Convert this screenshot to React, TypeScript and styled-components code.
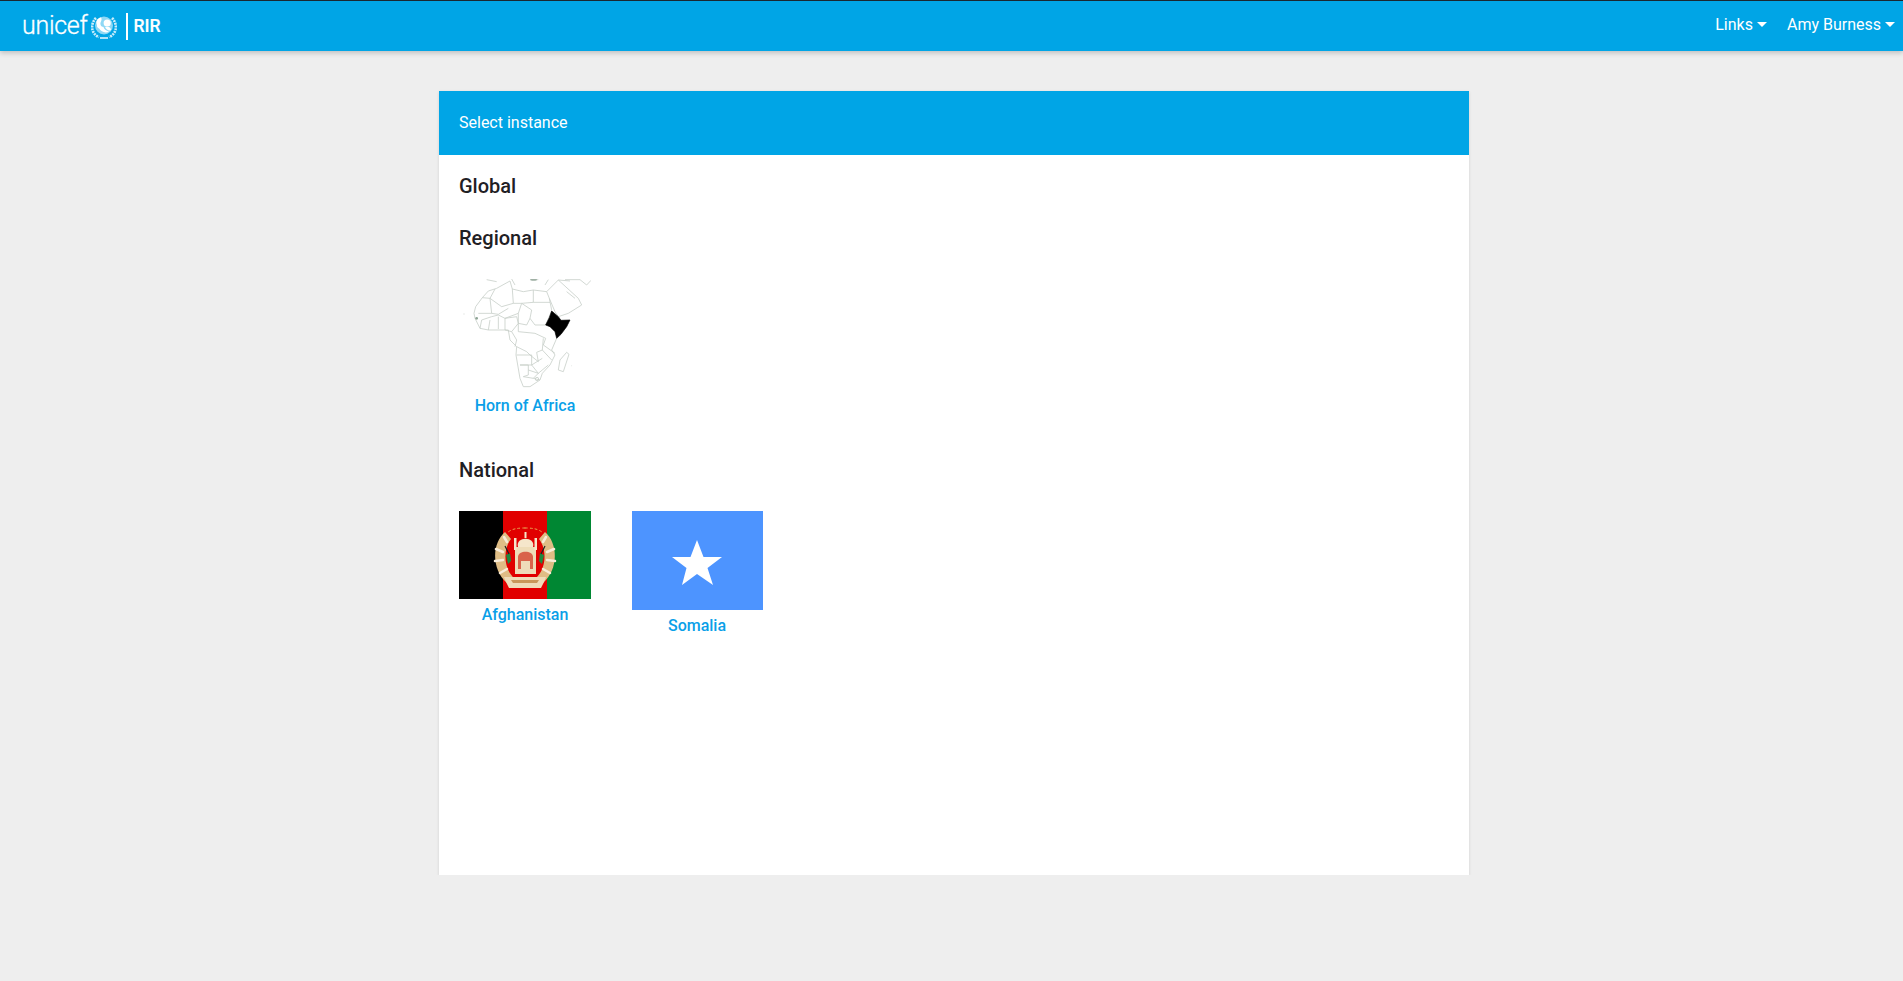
import React from 'react';
import styled, { createGlobalStyle } from 'styled-components';

const BLUE = '#00a5e6';

const Global = createGlobalStyle`
  html, body {
    margin: 0;
    padding: 0;
    background: #eeeeee;
    font-family: Roboto, 'Liberation Sans', sans-serif;
  }
`;

const NAVBAR = styled.header`
  height: 50px;
  border-top: 1px solid #1a2730;
  background: ${BLUE};
  box-shadow: 0 2px 5px rgba(0, 0, 0, 0.2);
  display: flex;
  align-items: center;
  justify-content: space-between;
  padding: 0 8px 0 22px;
  color: #fff;
`;
const BRAND = styled.div`
  display: flex;
  align-items: center;
`;
const WORDMARK = styled.span`
  font-size: 25px;
  font-weight: 300;
  letter-spacing: -0.3px;
  line-height: 30px;
  margin-right: 4px;
  -webkit-text-stroke: 0.3px #fff;
`;
const DIVIDER = styled.span`
  width: 2px;
  height: 27px;
  background: #fff;
  margin: 0 5px 0 9px;
`;
const PRODUCT = styled.span`
  font-size: 17.5px;
  font-weight: 500;
  -webkit-text-stroke: 0.2px #fff;
`;
const MENU = styled.nav`
  display: flex;
  gap: 20px;
  margin-top: -3px;
`;
const MENU_ITEM = styled.span`
  display: flex;
  align-items: center;
  gap: 4px;
  font-size: 16px;
`;
const CARET = styled.i`
  width: 0;
  height: 0;
  border-left: 5px solid transparent;
  border-right: 5px solid transparent;
  border-top: 5px solid #fff;
`;
const MAIN = styled.main`
  display: flex;
  justify-content: center;
  padding: 40px 0 0 5px;
`;
const CARD = styled.div`
  width: 1030px;
  height: 784px;
  background: #fff;
  box-shadow: 0 1px 3px rgba(0, 0, 0, 0.12);
`;
const CARD_HEADER = styled.div`
  height: 62px;
  background: ${BLUE};
  color: #fff;
  font-size: 16px;
  display: flex;
  align-items: center;
  padding: 0 20px 2px;
`;
const CARD_BODY = styled.div`
  padding: 19px 20px 0;
  color: #1f2024;
`;
const SECTION = styled.section`
  margin-bottom: 28px;
`;
const HEADING = styled.h2`
  margin: 0;
  font-size: 20px;
  line-height: 24px;
  font-weight: 500;
`;
const INSTANCES = styled.div`
  display: flex;
  align-items: flex-start;
  gap: 40px;
  margin: 29px 0 43px;
`;
const INSTANCE = styled.a`
  width: 132px;
  display: flex;
  flex-direction: column;
  align-items: center;
  color: #0a9fe8;
  font-size: 16px;
  font-weight: 500;
  line-height: 19px;
`;
const PICTURE = styled.svg`
  display: block;
  margin-bottom: 6px;
`;

// map traced at 3x, scaled back down by the group transform
const MapPicture = () => (
  <PICTURE width="132" height="111" viewBox="0 0 132 111" fill="none">
    <g transform="translate(-4 -4) scale(0.3333)">
      <g stroke="#c6cec8" strokeWidth="2.4" strokeLinejoin="round">
        <path d="M57 115 L62 95 L82 68 L100 48 L125 40 L165 18 L172 42 L205 50 L235 45 L275 50 L283 70 L290 105 M305 190 L290 225 L300 240 L285 270 L262 295 L255 315 L225 335 L205 335 L195 310 L183 240 L185 215 L165 195 L160 165 L100 165 L75 160 L60 130 L57 115" />
        <path d="M82 68 L105 70 L110 115 L70 115 M120 42 L105 70 L140 95 L175 85 L172 42 M110 115 L130 118 L160 100 M175 85 L200 85 L190 115 L150 130 L130 120" />
        <path d="M200 85 L230 105 L225 130 L215 150 L190 145 L190 115 M200 85 L235 82 L235 45 M235 82 L285 82 M225 130 L240 150 L272 150 L290 108" />
        <path d="M150 130 L185 125 L190 145 L170 170 L150 165 L150 130 M75 160 L80 135 L110 125 L130 120 M100 165 L105 135 M130 125 L130 162" />
        <path d="M170 170 L185 195 L180 215 M190 145 L190 170 L240 175 L272 190 L265 210 M185 215 L215 230 L225 240 L250 260 L245 232 L262 225 L265 190" />
        <path d="M265 210 L300 235 M262 225 L290 255 M185 240 L230 240 L230 270 L195 270 M230 270 L262 250 M230 270 L250 295 L280 270" />
        <path d="M195 270 L220 270 L220 300 L205 305 M220 285 L250 295 L235 310 L205 305 M235 310 L255 315" />
        <circle cx="246" cy="312" r="5" />
        <path d="M335 232 L342 238 L325 290 L310 285 L315 255 Z" />
        <path d="M275 50 L310 15 L370 70 L380 90 L340 115 L310 125 L300 110 L283 70 M310 15 L345 18 M335 50 L360 70 M330 14 L375 14 M375 14 L395 30 L408 16" />
        <path d="M95 14 L125 20 M170 12 L180 30 M225 14 L250 14 M270 30 L280 14" />
      </g>
      <path
        d="M272 150 L283 128 L290 108 L310 125 L318 136 L345 135 L335 155 L318 178 L305 190 L300 170 L285 155 Z"
        fill="#000"
        stroke="#000"
        strokeWidth="2"
        strokeLinejoin="round"
      />
      <circle cx="65" cy="130" r="4" fill="#8fa596" />
      <circle cx="27" cy="117" r="2" fill="#dfe4e0" />
      <circle cx="350" cy="272" r="1.5" fill="#dfe4e0" />
      <ellipse cx="236" cy="14" rx="10" ry="3" fill="#9fb0a4" />
    </g>
  </PICTURE>
);

const AfghanistanFlag = () => (
  <PICTURE width="132" height="88" viewBox="0 0 132 88">
    <rect width="44" height="88" fill="#000" />
    <rect x="44" width="44" height="88" fill="#e10000" />
    <rect x="88" width="44" height="88" fill="#008733" />
    <path d="M46 21 C33 32 32 58 48 72 L56 68 C44 58 44 38 52 28 Z" fill="#dfbd85" />
    <path d="M86 21 C99 32 100 58 84 72 L76 68 C88 58 88 38 80 28 Z" fill="#dfbd85" />
    <g fill="none" strokeLinecap="round">
      <path
        d="M37 38 L44 41 M36 50 L44 49 M41 62 L48 58 M45 26 L48 31 M95 38 L88 41 M96 50 L88 49 M91 62 L84 58 M87 26 L84 31"
        stroke="#f8ecd8"
        strokeWidth="2.5"
      />
      <path d="M66 17 C58 17 52 18 48 22 M66 17 C74 17 80 18 84 22" stroke="#e9a24f" strokeWidth="1" strokeDasharray="2 3" />
    </g>
    <path d="M45 66 L87 66 L85 71 L82 77 L50 77 L47 71 Z" fill="#efdcb9" />
    <path d="M52 69 L80 69 L78 72 L54 72 Z" fill="#c9975a" />
    <path d="M56 36 L77 36 L77 63 L56 63 Z" fill="#eedcb8" />
    <path d="M59 36 C56 25 77 25 74 36 Z" fill="#f5e6cb" />
    <path d="M59 58 L59 46 C59 39 74 39 74 46 L74 58 Z" fill="#d9634a" />
    <path d="M62 58 L62 50 L71 50 L71 58 Z" fill="#efdcb9" />
    <path d="M55 27 h2.5 v12 h-2.5 Z M75.5 27 h2.5 v12 h-2.5 Z M65.5 21 h2 v6 h-2 Z" fill="#f5e6cb" />
    <path d="M47 44 L51 42 L52 50 L49 53 Z M85 44 L81 42 L80 50 L83 53 Z" fill="#1e8a3f" />
    <path d="M46 35 L50 43 M86 35 L82 43" stroke="#222" strokeWidth="1.2" />
  </PICTURE>
);

const SomaliaFlag = () => (
  <PICTURE width="131" height="99" viewBox="0 0 131 99">
    <rect width="131" height="99" fill="#4d94ff" />
    <polygon
      points="65,29 71.5,46 90,46 75.5,57 81,74 65,63 50,74 54.5,57 40,46 58.5,46"
      fill="#fff"
    />
  </PICTURE>
);

const Emblem = () => (
  <svg width="26" height="25" viewBox="0 0 26 25" fill="none">
    <path d="M5 4 C-1 10 0 20 8 23 M21 4 C27 10 26 20 18 23" stroke="#cdeefb" strokeWidth="2.6" strokeDasharray="2 0.8" />
    <path d="M9 24 L17 24" stroke="#fff" strokeWidth="1.4" />
    <circle cx="13" cy="11.5" r="9" fill="#8fd8f5" />
    <path
      d="M10 3.5 C6 4 4.5 8 6 11 C5.5 13 7 14 8 14.5 C10 17 14 20 18 17.5 C15 17 13 15 12.5 13 C10 13 8.5 10 10 7.5 C10.5 6 11 5 10 3.5 Z"
      fill="#fff"
    />
    <circle cx="16.2" cy="9" r="3.6" fill="#fff" />
    <path d="M14 13 C17 12 20 13 20 16 C18 17.5 15.5 16 14 13 Z" fill="#fff" />
  </svg>
);

function Caret(): React.ReactElement {
  return <CARET />;
}

export default function App(): React.ReactElement {
  return (
    <>
      <Global />
      <NAVBAR>
        <BRAND>
          <WORDMARK>unicef</WORDMARK>
          <Emblem />
          <DIVIDER />
          <PRODUCT>RIR</PRODUCT>
        </BRAND>
        <MENU>
          <MENU_ITEM>
            Links
            <Caret />
          </MENU_ITEM>
          <MENU_ITEM>
            Amy Burness
            <Caret />
          </MENU_ITEM>
        </MENU>
      </NAVBAR>
      <MAIN>
        <CARD>
          <CARD_HEADER>Select instance</CARD_HEADER>
          <CARD_BODY>
            <SECTION>
              <HEADING>Global</HEADING>
            </SECTION>
            <SECTION>
              <HEADING>Regional</HEADING>
              <INSTANCES>
                <INSTANCE>
                  <MapPicture />
                  Horn of Africa
                </INSTANCE>
              </INSTANCES>
            </SECTION>
            <SECTION>
              <HEADING>National</HEADING>
              <INSTANCES>
                <INSTANCE>
                  <AfghanistanFlag />
                  Afghanistan
                </INSTANCE>
                <INSTANCE>
                  <SomaliaFlag />
                  Somalia
                </INSTANCE>
              </INSTANCES>
            </SECTION>
          </CARD_BODY>
        </CARD>
      </MAIN>
    </>
  );
}
